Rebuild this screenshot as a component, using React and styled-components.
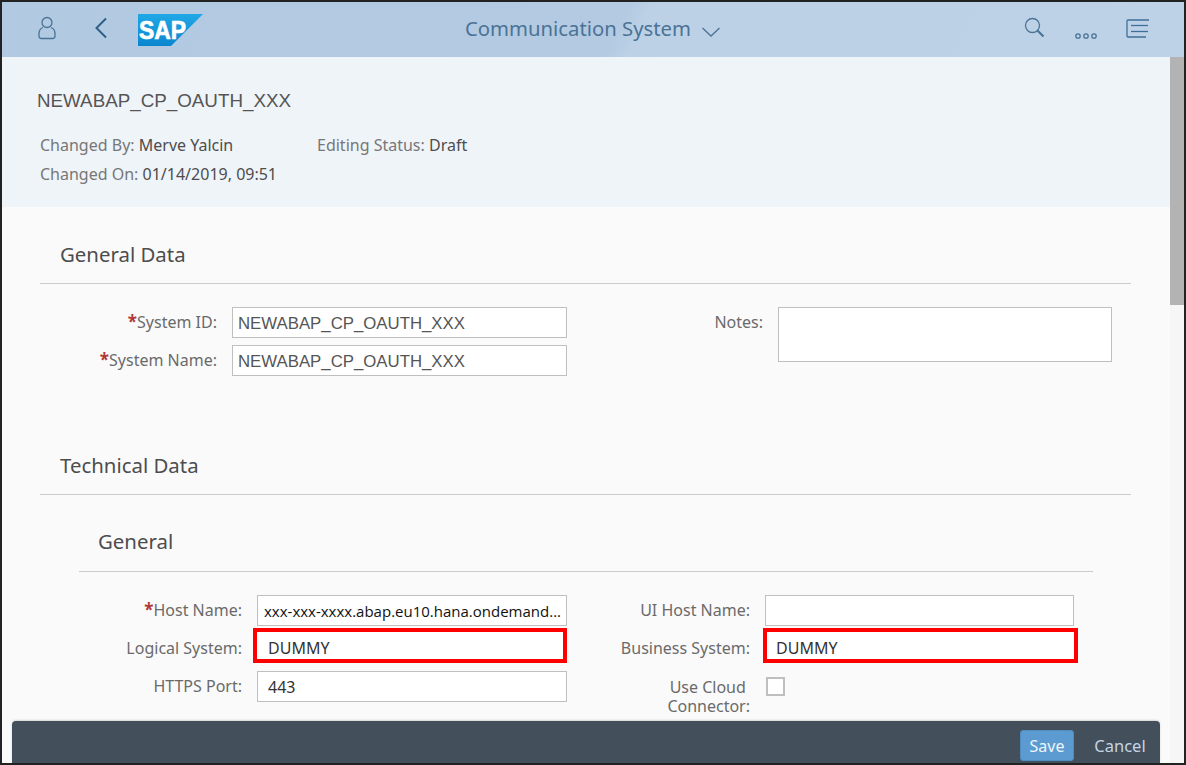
import React from 'react'
import styled, { createGlobalStyle } from 'styled-components'

const Global = createGlobalStyle`
  html, body { margin: 0; padding: 0; background: #fff; }
  body { font-family: "Noto Sans", "Liberation Sans", sans-serif; }
`

function UserIcon() {
  return (
    <svg width="20" height="24" viewBox="0 0 20 24" fill="none" stroke="#4a7396" strokeWidth="1.3">
      <circle cx="10" cy="6.5" r="5" />
      <path d="M6 11.5 C3 12.5 2 15 2 18 V20 C2 21.5 3 22.5 4.5 22.5 H15.5 C17 22.5 18 21.5 18 20 V18 C18 15 17 12.5 14 11.5" />
    </svg>
  )
}

function BackIcon() {
  return (
    <svg width="14" height="22" viewBox="0 0 14 22" fill="none" stroke="#2f5f88" strokeWidth="2">
      <path d="M12 1.5 L2.5 11 L12 20.5" />
    </svg>
  )
}

function SapLogo() {
  return (
    <svg width="65" height="32" viewBox="0 0 65 32">
      <defs>
        <linearGradient id="sapBlue" x1="0" y1="0" x2="0" y2="1">
          <stop offset="0" stopColor="#1fa8e6" />
          <stop offset="1" stopColor="#0a86cf" />
        </linearGradient>
      </defs>
      <polygon points="0,0 65,0 33,32 0,32" fill="url(#sapBlue)" />
      <text x="1" y="25" fill="#fff" stroke="#fff" strokeWidth="0.7" fontFamily="Liberation Sans" fontWeight="700" fontSize="25" textLength="47" lengthAdjust="spacingAndGlyphs">SAP</text>
    </svg>
  )
}

function ChevronDown() {
  return (
    <svg width="20" height="12" viewBox="0 0 20 12" fill="none" stroke="#4a7396" strokeWidth="1.3">
      <path d="M1.5 2 L10 10 L18.5 2" />
    </svg>
  )
}

function SearchIcon() {
  return (
    <svg width="21" height="21" viewBox="0 0 21 21" fill="none" stroke="#4a7396">
      <circle cx="8.5" cy="8.5" r="7" strokeWidth="1.3" />
      <path d="M13.5 13.5 L19.5 19.5" strokeWidth="2.2" />
    </svg>
  )
}

function MoreIcon() {
  return (
    <svg width="24" height="8" viewBox="0 0 24 8" fill="none" stroke="#4a7396" strokeWidth="1.3">
      <circle cx="4" cy="4" r="2.2" />
      <circle cx="12" cy="4" r="2.2" />
      <circle cx="20" cy="4" r="2.2" />
    </svg>
  )
}

function ListIcon() {
  return (
    <svg width="24" height="19" viewBox="0 0 24 19" fill="none" stroke="#3f6f98" strokeWidth="1.3">
      <path d="M23 1 H2 C1.3 1 1 1.3 1 2 V17 C1 17.700 1.300 18 2 18 H20" />
      <path d="M5 6.500 H22" />
      <path d="M5 12.500 H22" />
    </svg>
  )
}

export default function App() {
  return (
    <Frame>
      <Global />
      <ShellBar>
        <ShellLeft>
          <UserSlot><UserIcon /></UserSlot>
          <BackSlot><BackIcon /></BackSlot>
          <SapLogo />
        </ShellLeft>
        <ShellTitle>
          Communication System
          <ChevronSlot><ChevronDown /></ChevronSlot>
        </ShellTitle>
        <ShellRight>
          <SearchSlot><SearchIcon /></SearchSlot>
          <MoreSlot><MoreIcon /></MoreSlot>
          <ListSlot><ListIcon /></ListSlot>
        </ShellRight>
      </ShellBar>

      <Body>
        <Content>
          <ObjectHeader>
            <ObjectTitle>NEWABAP_CP_OAUTH_XXX</ObjectTitle>
            <MetaGrid>
              <Meta>Changed By: <b>Merve Yalcin</b></Meta>
              <Meta>Editing Status: <b>Draft</b></Meta>
              <Meta>Changed On: <b>01/14/2019, 09:51</b></Meta>
            </MetaGrid>
          </ObjectHeader>

          <Section>
            <SectionTitle>General Data</SectionTitle>
            <TopGrid>
              <Label><Star>*</Star>System ID:</Label>
              <Input>NEWABAP_CP_OAUTH_XXX</Input>
              <NotesLabel>Notes:</NotesLabel>
              <NotesBox />
              <Label><Star>*</Star>System Name:</Label>
              <Input>NEWABAP_CP_OAUTH_XXX</Input>
            </TopGrid>
          </Section>

          <Section $top={77}>
            <SectionTitle>Technical Data</SectionTitle>
            <SubSection>
              <SubTitle>General</SubTitle>
              <TechGrid>
                <Label><Star>*</Star>Host Name:</Label>
                <HostInput>xxx-xxx-xxxx.abap.eu10.hana.ondemand...</HostInput>
                <Label>UI Host Name:</Label>
                <Input $pad={9} />
                <Label>Logical System:</Label>
                <MarkedLeft>DUMMY</MarkedLeft>
                <Label>Business System:</Label>
                <MarkedRight>DUMMY</MarkedRight>
                <Label>HTTPS Port:</Label>
                <PortInput>443</PortInput>
                <CloudLabel>Use Cloud&nbsp;<br />Connector:</CloudLabel>
                <Checkbox />
              </TechGrid>
            </SubSection>
          </Section>
        </Content>
        <ScrollTrack><ScrollThumb /></ScrollTrack>
      </Body>

      <FooterBar>
        <SaveButton>Save</SaveButton>
        <CancelButton>Cancel</CancelButton>
      </FooterBar>
    </Frame>
  )
}

const Frame = styled.div`
  position: relative;
  box-sizing: border-box;
  width: 1186px;
  height: 765px;
  border: 2px solid #222;
  overflow: hidden;
  display: flex;
  flex-direction: column;
  background: #fafafa;
`

const ShellBar = styled.div`
  flex: 0 0 55px;
  display: grid;
  grid-template-columns: 1fr auto 1fr;
  align-items: center;
  background: linear-gradient(115deg, #b1c9e1 0%, #b3cae2 52%, #bdd1e6 54%, #bed2e7 100%);
`

const ShellLeft = styled.div`
  display: flex;
  align-items: center;
  padding-left: 35px;
`

const UserSlot = styled.span`
  display: flex;
  margin: -4px 37px 0 0;
`

const BackSlot = styled.span`
  display: flex;
  margin: -4px 30px 0 0;
`

const ShellTitle = styled.div`
  display: flex;
  align-items: center;
  margin-top: -3px;
  font-size: 20.3px;
  color: #4a7396;
  white-space: nowrap;
`

const ChevronSlot = styled.span`
  display: flex;
  margin: 8px 0 0 10px;
`

const ShellRight = styled.div`
  display: flex;
  align-items: center;
  justify-content: flex-end;
  padding-right: 34px;
`

const SearchSlot = styled.span`
  display: flex;
  margin: -4px 29px 0 0;
`

const MoreSlot = styled.span`
  display: flex;
  margin: 12px 28px 0 0;
`

const ListSlot = styled.span`
  display: flex;
  margin-top: -2px;
`

const Body = styled.div`
  flex: 1;
  display: flex;
  min-height: 0;
`

const Content = styled.div`
  flex: 1;
  min-width: 0;
`

const ObjectHeader = styled.div`
  box-sizing: border-box;
  height: 150px;
  padding: 33px 0 0 35px;
  background: #eff4f9;
`

const ObjectTitle = styled.div`
  font-family: "Liberation Sans", Arial, sans-serif;
  font-size: 18.8px;
  line-height: 21px;
  color: #555;
`

const MetaGrid = styled.div`
  display: grid;
  grid-template-columns: 277px auto;
  justify-content: start;
  row-gap: 8px;
  margin: 24px 0 0 3px;
`

const Meta = styled.div`
  font-size: 16px;
  line-height: 21px;
  color: #777;
  b {
    font-weight: 400;
    color: #4d4d4d;
  }
`

const Section = styled.section`
  margin: ${(p) => p.$top ?? 35}px 38px 0;
  width: 1091px;
`

const SectionTitle = styled.h2`
  margin: 0;
  padding: 0 0 17px 20px;
  font-size: 20.4px;
  line-height: 24px;
  font-weight: 400;
  color: #4d4d4d;
  border-bottom: 1px solid #ccc;
`

const TopGrid = styled.div`
  display: grid;
  grid-template-columns: 192px 335px 211px 334px;
  grid-auto-rows: 31px;
  row-gap: 7px;
  margin-top: 23px;
`

const Label = styled.div`
  align-self: center;
  padding-right: 15px;
  margin-top: -2px;
  font-size: 16px;
  line-height: 20px;
  text-align: right;
  color: #6a6a6a;
  white-space: nowrap;
`

const Star = styled.span`
  color: #b03a3a;
  font-weight: 700;
  font-size: 17px;
`

const Input = styled.div`
  box-sizing: border-box;
  height: 31px;
  padding-left: ${(p) => p.$pad ?? 5}px;
  border: 1px solid #bfbfbf;
  background: #fff;
  font-family: "Liberation Sans", Arial, sans-serif;
  font-size: 16.8px;
  line-height: 31px;
  color: #555;
  white-space: nowrap;
  overflow: hidden;
`

const PortInput = styled(Input)`
  padding-left: 10px;
  font-family: "Noto Sans", sans-serif;
  font-size: 16px;
  color: #333;
`

const NotesLabel = styled(Label)``

const NotesBox = styled.div`
  grid-row: span 2;
  box-sizing: border-box;
  height: 55px;
  border: 1px solid #bfbfbf;
  background: #fff;
`

const SubSection = styled.div`
  margin: 34px 38px 0 39px;
`

const SubTitle = styled.h3`
  margin: 0;
  padding: 0 0 18px 19px;
  font-size: 20.4px;
  line-height: 24px;
  font-weight: 400;
  color: #4d4d4d;
  border-bottom: 1px solid #ccc;
`

const TechGrid = styled.div`
  display: grid;
  grid-template-columns: 178px 310px 198px 309px;
  grid-auto-rows: 31px;
  row-gap: 7px;
  margin-top: 23px;
`

const HostInput = styled(Input)`
  font-family: "Open Sans", sans-serif;
  font-size: 15px;
  color: #111;
  padding-left: 6px;
`

const Marked = styled.div`
  box-sizing: border-box;
  height: 35px;
  margin-top: -5px;
  padding-top: 3px;
  border: 4px solid #f00;
  background: #fff;
  font-size: 16px;
  line-height: 27px;
  color: #333;
`

const MarkedLeft = styled(Marked)`
  margin-left: -4px;
  padding-left: 11px;
`

const MarkedRight = styled(Marked)`
  margin-left: -2px;
  margin-right: -4px;
  padding-left: 9px;
`

const CloudLabel = styled(Label)`
  line-height: 19px;
  align-self: start;
  margin-top: 7px;
`

const Checkbox = styled.div`
  box-sizing: border-box;
  width: 19px;
  height: 19px;
  margin: 6px 0 0 1px;
  border: 2px solid #bfbfbf;
  background: #fff;
`

const ScrollTrack = styled.div`
  flex: 0 0 14px;
  background: #f6f6f6;
`

const ScrollThumb = styled.div`
  height: 248px;
  background: #b3b3b3;
`

const FooterBar = styled.div`
  position: absolute;
  left: 10px;
  bottom: 0;
  box-sizing: border-box;
  width: 1148px;
  height: 42px;
  display: flex;
  align-items: flex-end;
  justify-content: flex-end;
  padding: 0 14px 2px 0;
  background: #434f5a;
  border-radius: 4px 4px 0 0;
  box-shadow: 0 -1px 2px rgba(0, 0, 0, 0.15);
`

const SaveButton = styled.button`
  box-sizing: border-box;
  width: 54px;
  height: 31px;
  padding: 0;
  border: 1px solid #4f8cc0;
  border-radius: 3px;
  background: #5b9bd1;
  color: #eef5fb;
  font: 16px "Noto Sans", sans-serif;
`

const CancelButton = styled.button`
  width: 52px;
  height: 31px;
  margin-left: 20px;
  padding: 0;
  border: 0;
  background: none;
  color: #c3d5e6;
  font: 16.5px "Noto Sans", sans-serif;
`
